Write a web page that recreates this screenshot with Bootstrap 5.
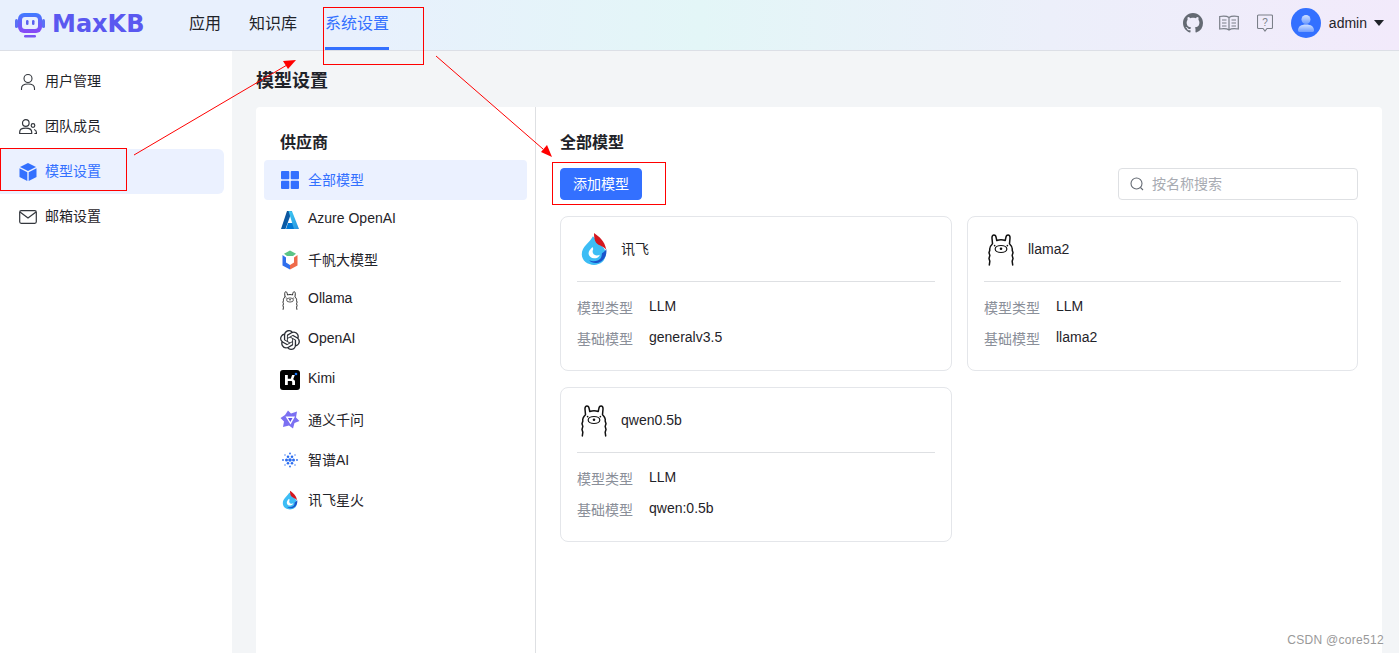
<!DOCTYPE html>
<html lang="zh">
<head>
<meta charset="UTF-8">
<title>MaxKB 模型设置</title>
<link href="https://cdn.jsdelivr.net/npm/bootstrap@5.3.0/dist/css/bootstrap.min.css" rel="stylesheet">
<style>
body { font-family: "Liberation Sans", "Noto Sans CJK SC", sans-serif; font-size: 14px; color: #1f2329; height: 653px; overflow: hidden; background: #f3f5f7; }
.app-head { height: 51px; border-bottom: 1px solid #dcdfe6; background: linear-gradient(90deg, #e8f0fd 0%, #e8f0fd 25%, #e3f6f7 50%, #eceffa 75%, #f2eafb 100%); }
.brand-name { font-family: "DejaVu Sans", sans-serif; font-weight: 700; font-size: 24px; line-height: 1; color: #5a58f0; width: 92px; margin-left: 7px; margin-bottom: 2px; }
.brand-box { width: 189px; padding-left: 15px; flex: none; }
.head-link { font-size: 16px; color: #1f2329; text-decoration: none; height: 50px; line-height: 48px; margin-right: 28px; }
.head-link.now { color: #3370ff; box-shadow: inset 0 -3px 0 #3370ff; height: 50px; }
.head-tools { padding-right: 15px; margin-bottom: 4px; }
.tool-book { margin-right: 18px; }
.tool-ask { margin-right: 18px; }
.tool-caret { margin-left: 7px; }
.side-box { width: 232px; height: 602px; background: #fff; padding-top: 8px; flex: none; }
.side-item { height: 45px; width: 224px; padding-left: 19px; color: #1f2329; border-radius: 0 6px 6px 0; gap: 8px; }
.side-item.now { background: #ebf1ff; color: #3370ff; }
.page-box { padding: 17px 17px 0 24px; }
.page-title { font-size: 18px; font-weight: 700; line-height: 26px; margin: 0 0 13px; }
.panel-box { background: #fff; border-radius: 4px; height: 560px; }
.vendor-col { width: 280px; padding: 24px 8px 0; border-right: 1px solid #dee0e3; flex: none; }
.col-title { font-size: 16px; font-weight: 700; line-height: 24px; margin: 0; }
.vendor-col .col-title { padding-left: 16px; margin-bottom: 5px; }
.vendor-item { height: 40px; padding-left: 16px; gap: 8px; border-radius: 4px; }
.vendor-item.now { background: #ebf1ff; color: #3370ff; }
.vendor-item svg { width: 20px; height: 20px; flex: none; }
.latin-name { margin-bottom: 4px; }
.models-col { padding: 24px 24px 0; }
.action-row { margin-top: 13px; }
.add-btn { background: #3370ff; border-color: #3370ff; font-size: 14px; width: 82px; height: 32px; padding: 0; border-radius: 4px; }
.find-box { width: 240px; height: 32px; border: 1px solid #dee0e3; border-radius: 4px; padding-left: 11px; gap: 8px; color: #a8abb2; }
.model-grid { display: grid; grid-template-columns: 392px 391px; column-gap: 15px; row-gap: 16px; margin-top: 16px; }
.model-card { height: 155px; border: 1px solid #e4e6ea; border-radius: 8px; padding: 16px; }
.model-top { gap: 10px; border-bottom: 1px solid #dee0e3; padding-bottom: 16px; height: 49px; }
.model-line { height: 31px; line-height: 31px; }
.model-line span:first-child { color: #8a8f99; width: 72px; padding-top: 2px; }
.model-lines { padding-top: 9px; }
.overlay-art { position: absolute; left: 0; top: 0; width: 1399px; height: 653px; pointer-events: none; }
.wm-text { position: absolute; right: 15px; top: 631px; font-size: 12px; color: #999; letter-spacing: .3px; }
</style>
</head>
<body>
<svg width="0" height="0" class="position-absolute">
  <defs>
    <symbol id="llama" viewBox="0 0 32 32">
      <path fill="none" stroke="#111" stroke-width="1.400" stroke-linecap="round" stroke-linejoin="round" d="M8 11 7.500 5.500c0-3.500 3.500-3.500 4 0l.5 2.500c2.500-1 5.500-1 8 0l.5-2.500c.5-3.500 4-3.500 4 0L24 11c2 2 3 4 2.500 6l.8 2.500-.8 2.500.8 3-.8 2.500.5 3.500M8 11c-2 2-3 4-2.500 6l-.8 2.500.8 2.500-.8 3 .8 2.500-.5 3.500"/>
      <ellipse cx="16" cy="16" rx="5.500" ry="3.300" fill="none" stroke="#111" stroke-width="1.100"/>
      <circle cx="16" cy="15.700" r="1.200" fill="#111"/>
      <circle cx="10" cy="12.800" r=".8" fill="#111"/><circle cx="22" cy="12.800" r=".8" fill="#111"/>
    </symbol>
    <symbol id="flame" viewBox="0 0 32 32">
      <path fill="#3dbdf5" d="M15 4C12 10 4.500 13.500 4.500 21 4.500 27 10 31 16 31s11-4 11-10c0-2-.5-4-1.500-5.500z"/>
      <path fill="#fff" d="M14.500 14c-2.500 2.500-4 4.500-3.500 7 .4 2 2.500 3.800 5 3.800 2.800 0 5-1.500 5.500-3.500-1.500 1-3.800 1-5 .2-1.800-1.200-2.200-3.200-1.400-4.800.3-1 .1-1.700-.6-2.700z"/>
      <path fill="#1a55cc" d="M27.500 16c1.300 6.500-3 12.500-9 13.200-2.800.3-5.500-.5-7-2.500 3 1.300 6 1 8.500-.2 3.200-1.500 3-3.500 3.500-6.500 1.500-.8 3-2 4-4z"/>
      <path fill="#d4171f" d="M16 1c5 3.500 10 7.500 11.500 15.500C25 13 20.500 13 18 10c-1.500-2-2-5-2-9z"/>
    </symbol>
  </defs>
</svg>

<header class="app-head d-flex align-items-center">
  <div class="brand-box d-flex align-items-center">
    <svg width="30" height="26" viewBox="0 0 30 26"><defs><linearGradient id="lg1" x1="0" y1="0" x2="0" y2="1"><stop offset="0" stop-color="#3f7cff"/><stop offset="1" stop-color="#8b46f5"/></linearGradient></defs><rect x="0" y="7" width="3" height="9" rx="1.500" fill="#5a70f5"/><rect x="27" y="7" width="3" height="9" rx="1.500" fill="#5a70f5"/><rect x="3" y="1" width="24" height="20" rx="6" fill="url(#lg1)"/><rect x="7" y="5" width="16" height="12" rx="3" fill="#e8effd"/><rect x="11" y="8" width="2.500" height="5" rx="1.200" fill="#5a60f0"/><rect x="17" y="8" width="2.500" height="5" rx="1.200" fill="#5a60f0"/><rect x="9" y="23" width="12" height="2.500" rx="1.200" fill="#7a55f2"/></svg>
    <span class="brand-name">MaxKB</span>
  </div>
  <nav class="d-flex align-items-start h-100">
    <a class="head-link" href="#">应用</a>
    <a class="head-link" href="#">知识库</a>
    <a class="head-link now" href="#">系统设置</a>
  </nav>
  <div class="head-tools ms-auto d-flex align-items-center">
    <svg class="me-3" width="20" height="20" viewBox="0 0 16 16" fill="#646a73"><path d="M8 0C3.580 0 0 3.580 0 8c0 3.540 2.290 6.530 5.470 7.590.4.070.55-.17.55-.38 0-.19-.01-.82-.01-1.490-2.010.37-2.530-.49-2.690-.94-.09-.23-.48-.94-.82-1.130-.28-.15-.68-.52-.01-.53.63-.01 1.080.58 1.230.82.720 1.210 1.870.87 2.330.66.070-.52.280-.87.510-1.070-1.780-.2-3.640-.89-3.640-3.950 0-.87.310-1.590.820-2.150-.08-.2-.36-1.020.08-2.120 0 0 .67-.21 2.200.82.640-.18 1.320-.27 2-.27.68 0 1.360.09 2 .27 1.530-1.040 2.200-.82 2.200-.82.44 1.100.16 1.920.08 2.120.51.56.82 1.270.82 2.150 0 3.070-1.870 3.750-3.650 3.950.29.25.54.73.54 1.480 0 1.070-.01 1.930-.01 2.200 0 .21.15.46.55.38A8.013 8.013 0 0 0 16 8c0-4.420-3.580-8-8-8z"/></svg>
    <svg class="tool-book" width="20" height="16" viewBox="0 0 20 16" fill="none" stroke="#7a7f88" stroke-width="1.200"><path d="M10 2.500C8 1 4 1 .7 1.500v12.500c3.300-.5 7.300-.5 9.300 1 2-1.500 6-1.500 9.300-1V1.500C16 1 12 1 10 2.500zM10 2.500V15M3 5h4.500M3 8h4.500M3 11h4.500M12.500 5H17M12.500 8H17M12.500 11H17"/></svg>
    <svg class="tool-ask" width="16" height="18" viewBox="0 0 16 18" fill="none" stroke="#7a7f88" stroke-width="1.100"><path d="M1.500 1h13a1 1 0 0 1 1 1v11.500a1 1 0 0 1-1 1H10L8 17l-2-2.500H1.500a1 1 0 0 1-1-1V2a1 1 0 0 1 1-1z"/><text x="8" y="11.500" text-anchor="middle" font-size="10" fill="#7a7f88" stroke="none" font-family="Liberation Sans">?</text></svg>
    <svg width="30" height="30" viewBox="0 0 30 30"><defs><linearGradient id="lg2" x1="0" y1="0" x2="0" y2="1"><stop offset="0" stop-color="#cfe0ff"/><stop offset="1" stop-color="#6d9bff"/></linearGradient></defs><circle cx="15" cy="15" r="15" fill="#3370ff"/><circle cx="15" cy="11.500" r="4.500" fill="url(#lg2)"/><path d="M7 22.500c0-4 3-6 8-6s8 2 8 6c0 1-1 1.500-2 1.500H9c-1 0-2-.5-2-1.500z" fill="url(#lg2)"/></svg>
    <span class="ms-2">admin</span>
    <svg class="tool-caret" width="10" height="6" viewBox="0 0 10 6"><path d="M0 0h10L5 6z" fill="#1f2329"/></svg>
  </div>
</header>

<div class="d-flex">
  <aside class="side-box">
    <div class="side-item d-flex align-items-center">
      <svg width="18" height="18" viewBox="0 0 18 18" fill="none" stroke="#33373d" stroke-width="1.100"><circle cx="9" cy="5.500" r="4"/><path d="M2.500 17v-1.500c0-3 2-4.500 6.500-4.500s6.500 1.500 6.500 4.500V17"/></svg>
      <span>用户管理</span>
    </div>
    <div class="side-item d-flex align-items-center">
      <svg width="18" height="18" viewBox="0 0 18 18" fill="none" stroke="#33373d" stroke-width="1.200"><circle cx="6.800" cy="5" r="3.300"/><path d="M.7 15.500v-1.500c0-2.500 2-3.800 6-3.800s6 1.300 6 3.800v1.500z"/><circle cx="14" cy="7.500" r="1.800"/><path d="M15 11.500c1.500.4 2.400 1.300 2.400 2.700v1.300h-2"/></svg>
      <span>团队成员</span>
    </div>
    <div class="side-item now d-flex align-items-center">
      <svg width="18" height="18" viewBox="0 0 18 18"><path d="M9 0l8 4-8 4-8-4z" fill="#3370ff"/><path d="M.5 5.300L8.300 9.300V18L.5 14z" fill="#3370ff"/><path d="M17.500 5.300L9.700 9.300V18l7.800-4z" fill="#3370ff"/></svg>
      <span>模型设置</span>
    </div>
    <div class="side-item d-flex align-items-center">
      <svg width="18" height="16" viewBox="0 0 18 16" fill="none" stroke="#33373d" stroke-width="1.200"><rect x=".7" y="1.700" width="16.600" height="12.600" rx="1.500"/><path d="M1 3l8 6 8-6"/></svg>
      <span>邮箱设置</span>
    </div>
  </aside>

  <main class="page-box flex-grow-1">
    <h1 class="page-title">模型设置</h1>
    <div class="panel-box d-flex">
      <div class="vendor-col">
        <h2 class="col-title">供应商</h2>
        <div class="vendor-item now d-flex align-items-center">
          <svg viewBox="0 0 20 20" fill="#3370ff"><rect x="1" y="1" width="8.300" height="8.300" rx="1"/><rect x="10.700" y="1" width="8.300" height="8.300" rx="1"/><rect x="1" y="10.700" width="8.300" height="8.300" rx="1"/><rect x="10.700" y="10.700" width="8.300" height="8.300" rx="1"/></svg>
          <span>全部模型</span>
        </div>
        <div class="vendor-item d-flex align-items-center">
          <svg viewBox="0 0 20 20"><defs><linearGradient id="az1" x1="0" y1="0" x2="1" y2="1"><stop offset="0" stop-color="#114a8b"/><stop offset="1" stop-color="#0669bc"/></linearGradient><linearGradient id="az2" x1="0" y1="0" x2="1" y2="1"><stop offset="0" stop-color="#3ccbf4"/><stop offset="1" stop-color="#2892df"/></linearGradient></defs><path d="M7 1h5L5.500 19H1z" fill="url(#az1)"/><path d="M8 13h7l2 6H6z" fill="#0078d4"/><path d="M12 1.200L19 19h-5L8.500 1z" fill="url(#az2)"/></svg>
          <span class="latin-name">Azure OpenAI</span>
        </div>
        <div class="vendor-item d-flex align-items-center">
          <svg viewBox="0 0 20 20"><path d="M10 .5l6 3.300-3 2.200H7L4 3.800z" fill="#5cc486"/><path d="M2.500 5L6 7.500v5l4 2.500v4.500L2.500 15.500z" fill="#2f6fed"/><path d="M17.500 5L14 7.500v5l-4 2.500v4.500l7.500-4z" fill="#ef6a4a"/></svg>
          <span>千帆大模型</span>
        </div>
        <div class="vendor-item d-flex align-items-center"><svg><use href="#llama"/></svg><span class="latin-name">Ollama</span></div>
        <div class="vendor-item d-flex align-items-center">
          <svg viewBox="0 0 24 24" fill="#2b2f36"><path d="M22.282 9.821a5.985 5.985 0 0 0-.516-4.910 6.046 6.046 0 0 0-6.510-2.900A6.065 6.065 0 0 0 4.981 4.180a5.985 5.985 0 0 0-3.998 2.900 6.046 6.046 0 0 0 .743 7.097 5.980 5.980 0 0 0 .510 4.911 6.051 6.051 0 0 0 6.515 2.900A5.985 5.985 0 0 0 13.260 24a6.056 6.056 0 0 0 5.772-4.206 5.990 5.990 0 0 0 3.997-2.900 6.056 6.056 0 0 0-.747-7.073zM13.260 22.430a4.476 4.476 0 0 1-2.876-1.040l.141-.081 4.779-2.758a.795.795 0 0 0 .392-.681v-6.737l2.020 1.168a.071.071 0 0 1 .038.052v5.583a4.504 4.504 0 0 1-4.494 4.494zM3.600 18.304a4.470 4.470 0 0 1-.535-3.014l.142.085 4.783 2.759a.771.771 0 0 0 .780 0l5.843-3.369v2.332a.080.080 0 0 1-.033.062L9.740 19.950a4.500 4.500 0 0 1-6.140-1.646zM2.340 7.896a4.485 4.485 0 0 1 2.366-1.973V11.600a.766.766 0 0 0 .388.676l5.815 3.355-2.020 1.168a.076.076 0 0 1-.071 0l-4.830-2.786A4.504 4.504 0 0 1 2.340 7.872zm16.597 3.855l-5.833-3.387L15.119 7.200a.076.076 0 0 1 .071 0l4.830 2.791a4.494 4.494 0 0 1-.676 8.105v-5.678a.790.790 0 0 0-.407-.667zm2.010-3.023l-.141-.085-4.774-2.782a.776.776 0 0 0-.785 0L9.409 9.230V6.897a.066.066 0 0 1 .028-.061l4.830-2.787a4.500 4.500 0 0 1 6.680 4.660zm-12.640 4.135l-2.020-1.164a.080.080 0 0 1-.038-.057V6.075a4.500 4.500 0 0 1 7.375-3.453l-.142.080L8.704 5.460a.795.795 0 0 0-.393.681zm1.097-2.365l2.602-1.500 2.607 1.500v2.999l-2.597 1.500-2.607-1.500z"/></svg>
          <span class="latin-name">OpenAI</span>
        </div>
        <div class="vendor-item d-flex align-items-center">
          <svg viewBox="0 0 20 20"><rect width="20" height="20" rx="3" fill="#000"/><path d="M5 5h2.800v3.700h3l1.300-3.700h2.700l-1.600 4.300c1 .4 1.800 1.200 1.800 2.500V15h-2.800v-3c0-.6-.3-.9-.9-.9H7.800V15H5z" fill="#fff"/><circle cx="16" cy="4" r="1.300" fill="#1677ff"/></svg>
          <span class="latin-name">Kimi</span>
        </div>
        <div class="vendor-item d-flex align-items-center">
          <svg viewBox="0 0 20 20"><path d="M8 .5l3 3 6-2-1 6 3.500 3.500-5 2-1.500 5.500-4-3-6 1.500 1-5.500L.5 8 5 5z" fill="#7b70f2"/><path d="M5.500 6.500h9.500l-4.500 8z" fill="#fff"/><path d="M8 8h4.500l-2.200 4z" fill="#5f53ea"/></svg>
          <span>通义千问</span>
        </div>
        <div class="vendor-item d-flex align-items-center">
          <svg viewBox="0 0 20 20" fill="#2a6cf0"><circle cx="10" cy="10" r="1.800"/><circle cx="6.500" cy="10" r="1.500"/><circle cx="13.500" cy="10" r="1.500"/><circle cx="8" cy="6.800" r="1.300"/><circle cx="12" cy="6.800" r="1.300"/><circle cx="8" cy="13.200" r="1.300"/><circle cx="12" cy="13.200" r="1.300"/><circle cx="10" cy="3.500" r=".9"/><circle cx="10" cy="16.500" r=".9"/><circle cx="3" cy="10" r=".9"/><circle cx="17" cy="10" r=".9"/><circle cx="5" cy="5" r=".7"/><circle cx="15" cy="5" r=".7"/><circle cx="5" cy="15" r=".7"/><circle cx="15" cy="15" r=".7"/></svg>
          <span>智谱AI</span>
        </div>
        <div class="vendor-item d-flex align-items-center"><svg><use href="#flame"/></svg><span>讯飞星火</span></div>
      </div>

      <div class="models-col flex-grow-1">
        <h2 class="col-title">全部模型</h2>
        <div class="action-row d-flex justify-content-between align-items-center">
          <button class="btn btn-primary add-btn" type="button">添加模型</button>
          <div class="find-box d-flex align-items-center">
            <svg width="14" height="14" viewBox="0 0 14 14" fill="none" stroke="#646a73" stroke-width="1.100"><circle cx="6.500" cy="6.500" r="5.500"/><path d="M10.500 10.500l2.500 2.500"/></svg>
            <span>按名称搜索</span>
          </div>
        </div>
        <div class="model-grid">
          <div class="model-card">
            <div class="model-top d-flex align-items-center"><svg width="34" height="34"><use href="#flame"/></svg><span>讯飞</span></div>
            <div class="model-lines">
              <div class="model-line d-flex"><span>模型类型</span><span>LLM</span></div>
              <div class="model-line d-flex"><span>基础模型</span><span>generalv3.5</span></div>
            </div>
          </div>
          <div class="model-card">
            <div class="model-top d-flex align-items-center"><svg width="34" height="34"><use href="#llama"/></svg><span>llama2</span></div>
            <div class="model-lines">
              <div class="model-line d-flex"><span>模型类型</span><span>LLM</span></div>
              <div class="model-line d-flex"><span>基础模型</span><span>llama2</span></div>
            </div>
          </div>
          <div class="model-card">
            <div class="model-top d-flex align-items-center"><svg width="34" height="34"><use href="#llama"/></svg><span>qwen0.5b</span></div>
            <div class="model-lines">
              <div class="model-line d-flex"><span>模型类型</span><span>LLM</span></div>
              <div class="model-line d-flex"><span>基础模型</span><span>qwen:0.5b</span></div>
            </div>
          </div>
        </div>
      </div>
    </div>
  </main>
</div>

<svg class="overlay-art" viewBox="0 0 1399 653" fill="none" stroke="#f00" stroke-width="1">
  <rect x="323.500" y="7.500" width="100" height="57"/>
  <rect x=".5" y="148.500" width="126" height="42"/>
  <rect x="552.500" y="162.500" width="113" height="42"/>
  <path d="M134 155L287 65M436 56L543 149"/>
  <path d="M296 60l-13 1 5 8z" fill="#f00" stroke="none"/>
  <path d="M552 157l-5-12-6 7z" fill="#f00" stroke="none"/>
</svg>
<div class="wm-text">CSDN @core512</div>
</body>
</html>
